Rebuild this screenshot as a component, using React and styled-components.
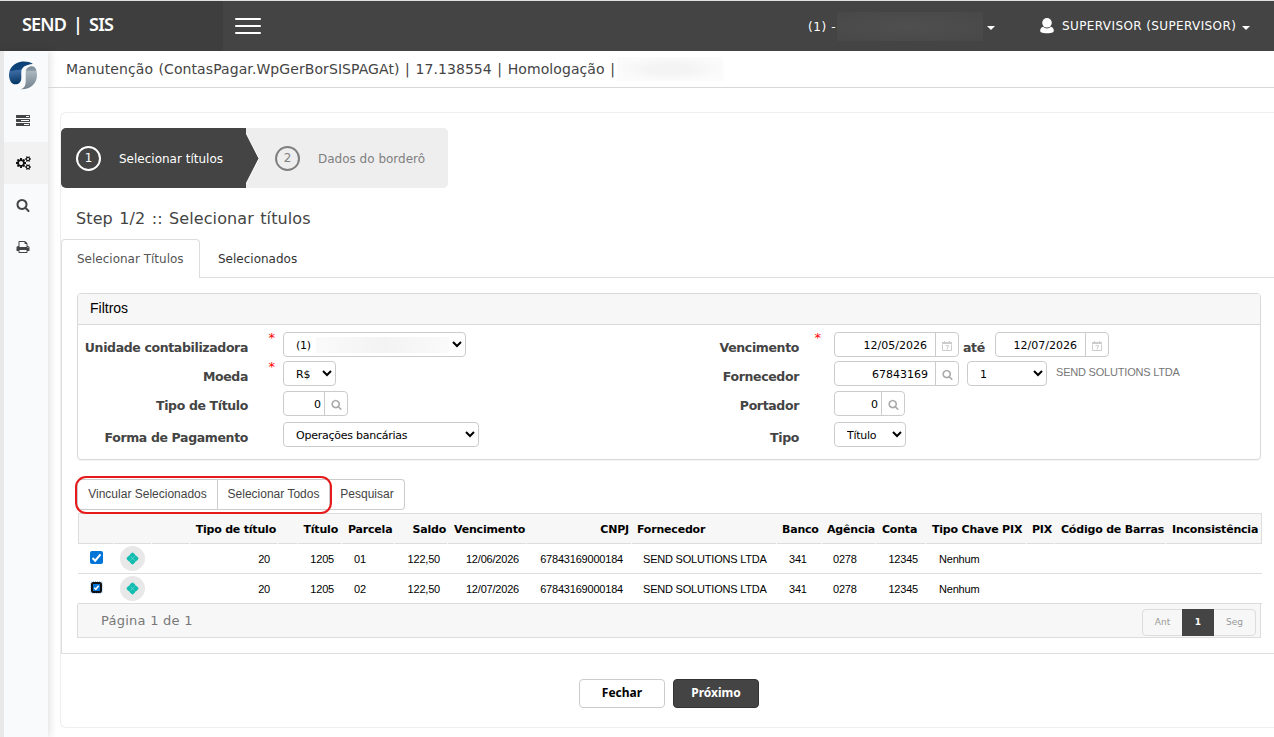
import React from "react";
import styled, { createGlobalStyle } from "styled-components";

const filtersLeft = [
  { label: "Unidade contabilizadora", required: true, type: "select", value: "(1)", width: 183, masked: true },
  { label: "Moeda", required: true, type: "select", value: "R$", width: 53 },
  { label: "Tipo de Título", type: "lookup", value: "0", width: 65, raised: true },
  { label: "Forma de Pagamento", type: "select", value: "Operações bancárias", width: 196 },
];

const columns = [
  { key: "check" },
  { key: "pix" },
  { key: "empty" },
  { key: "tipo", title: "Tipo de título", align: "right" },
  { key: "gap" },
  { key: "titulo", title: "Título", align: "right", headPad: 3 },
  { key: "parcela", title: "Parcela" },
  { key: "saldo", title: "Saldo", align: "right" },
  { key: "vencimento", title: "Vencimento", cellAlign: "right" },
  { key: "cnpj", title: "CNPJ", align: "right", headPad: 2, cellPad: 8 },
  { key: "fornecedor", title: "Fornecedor", headPad: 5, cellPad: 11 },
  { key: "banco", title: "Banco", headPad: 5 },
  { key: "agencia", title: "Agência", headPad: 5, cellPad: 11 },
  { key: "conta", title: "Conta", cellAlign: "right" },
  { key: "tipoChave", title: "Tipo Chave PIX", cellPad: 13 },
  { key: "chave", title: "PIX", headPad: 5 },
  { key: "barras", title: "Código de Barras" },
  { key: "inconsistencia", title: "Inconsistência" },
];

const base = {
  tipo: "20",
  titulo: "1205",
  saldo: "122,50",
  cnpj: "67843169000184",
  fornecedor: "SEND SOLUTIONS LTDA",
  banco: "341",
  agencia: "0278",
  conta: "12345",
  tipoChave: "Nenhum",
};

const rows = [
  { ...base, parcela: "01", vencimento: "12/06/2026" },
  { ...base, parcela: "02", vencimento: "12/07/2026", focused: true },
];

const SearchIcon = ({ size }) => (
  <svg width={size} height={size} viewBox="0 0 1792 1792" fill="currentColor">
    <path d="M1216 832q0-185-131.5-316.5t-316.5-131.5-316.5 131.5-131.5 316.5 131.5 316.5 316.5 131.5 316.5-131.5 131.5-316.5zm512 832q0 52-38 90t-90 38q-54 0-90-38l-343-342q-179 124-399 124-143 0-273.5-55.5t-225-150-150-225-55.5-273.5 55.5-273.5 150-225 225-150 273.5-55.5 273.5 55.5 225 150 150 225 55.5 273.5q0 220-124 399l343 343q37 37 37 90z" />
  </svg>
);

const TasksIcon = () => (
  <svg width="14" height="14" viewBox="0 0 1792 1792" fill="currentColor">
    <path d="M1024 1408h640v-128h-640v128zm-384-512h1024v-128h-1024v128zm640-512h384v-128h-384v128zm512 832v256q0 26-19 45t-45 19h-1664q-26 0-45-19t-19-45v-256q0-26 19-45t45-19h1664q26 0 45 19t19 45zm0-512v256q0 26-19 45t-45 19h-1664q-26 0-45-19t-19-45v-256q0-26 19-45t45-19h1664q26 0 45 19t19 45zm0-512v256q0 26-19 45t-45 19h-1664q-26 0-45-19t-19-45v-256q0-26 19-45t45-19h1664q26 0 45 19t19 45z" />
  </svg>
);

const CogsIcon = () => (
  <svg width="15" height="14" viewBox="0 0 1920 1792" fill="currentColor">
    <path d="M896 896q0-106-75-181t-181-75-181 75-75 181 75 181 181 75 181-75 75-181zm768 512q0-52-38-90t-90-38-90 38-38 90q0 53 37.5 90.5t90.5 37.5 90.5-37.5 37.5-90.5zm0-1024q0-52-38-90t-90-38-90 38-38 90q0 53 37.5 90.5t90.5 37.5 90.5-37.5 37.5-90.5zm-384 421v185q0 10-7 19.5t-16 10.5l-155 24q-11 35-32 76 34 48 90 115 7 11 7 20 0 12-7 19-23 30-82.5 89.5t-78.5 59.5q-11 0-21-7l-115-90q-37 19-77 31-11 108-23 155-7 24-30 24h-186q-11 0-20-7.5t-10-17.5l-23-153q-34-10-75-31l-118 89q-7 7-20 7-11 0-21-8-144-133-144-160 0-9 7-19 10-14 41-53t47-61q-23-44-35-82l-152-24q-10-1-17-9.5t-7-19.500v-185q0-10 7-19.500t16-10.500l155-24q11-35 32-76-34-48-90-115-7-11-7-20 0-12 7-20 22-30 82-89t79-59q11 0 21 7l115 90q34-18 77-32 11-108 23-154 7-24 30-24h186q11 0 20 7.500t10 17.500l23 153q34 10 75 31l118-89q8-7 20-7 11 0 21 8 144 133 144 160 0 8-7 19-12 16-42 54t-45 60q23 48 34 82l152 23q10 2 17 10.500t7 19.500zm640 533v140q0 16-149 31-12 27-30 52 51 113 51 138 0 4-4 7-122 71-124 71-8 0-46-47t-52-68q-20 2-30 2t-30-2q-14 21-52 68t-46 47q-2 0-124-71-4-3-4-7 0-25 51-138-18-25-30-52-149-15-149-31v-140q0-16 149-31 13-29 30-52-51-113-51-138 0-4 4-7 4-2 35-20t59-34 30-16q8 0 46 46.500t52 67.500q20-2 30-2t30 2q51-71 92-112l6-2q4 0 124 70 4 3 4 7 0 25-51 138 17 23 30 52 149 15 149 31zm0-1024v140q0 16-149 31-12 27-30 52 51 113 51 138 0 4-4 7-122 71-124 71-8 0-46-47t-52-68q-20 2-30 2t-30-2q-14 21-52 68t-46 47q-2 0-124-71-4-3-4-7 0-25 51-138-18-25-30-52-149-15-149-31v-140q0-16 149-31 13-29 30-52-51-113-51-138 0-4 4-7 4-2 35-20t59-34 30-16q8 0 46 46.500t52 67.500q20-2 30-2t30 2q51-71 92-112l6-2q4 0 124 70 4 3 4 7 0 25-51 138 17 23 30 52 149 15 149 31z" />
  </svg>
);

const PrintIcon = () => (
  <svg width="14" height="14" viewBox="0 0 1792 1792" fill="currentColor">
    <path d="M448 1536h896v-256h-896v256zm0-640h896v-384h-160q-40 0-68-28t-28-68v-160h-640v640zm1152 64q0-26-19-45t-45-19-45 19-19 45 19 45 45 19 45-19 19-45zm128 0v416q0 13-9.5 22.5t-22.5 9.5h-224v160q0 40-28 68t-68 28h-960q-40 0-68-28t-28-68v-160h-224q-13 0-22.5-9.5t-9.5-22.5v-416q0-79 56.5-135.5t135.5-56.5h64v-544q0-40 28-68t68-28h672q40 0 88 20t76 48l152 152q28 28 48 76t20 88v256h64q79 0 135.5 56.5t56.5 135.5z" />
  </svg>
);

const CalendarIcon = () => (
  <svg width="10" height="10" viewBox="0 0 10 10" fill="none" stroke="#ccc">
    <path d="M.5 3.500v6h9v-6" />
    <path d="M0 2h10" strokeWidth="2" />
    <path d="M2.500 0v1M7.500 0v1" />
    <path d="M3.500 4.700h3L5 8.500" />
  </svg>
);

const UserIcon = () => (
  <svg width="14" height="16" viewBox="0 0 14 16" fill="#fff">
    <ellipse cx="7" cy="4.8" rx="4.8" ry="4.8" />
    <path d="M3.2 8.7C1.2 9.3.2 10.6.2 12.6c0 2 1.3 2.7 6.8 2.7s6.8-.7 6.8-2.7c0-2-1-3.300-3-3.900C9.800 9.900 8.500 10.400 7 10.400s-2.800-.5-3.800-1.700z" />
  </svg>
);

const LogoIcon = () => (
  <svg width="28" height="29" viewBox="0 0 28 29">
    <defs>
      <linearGradient id="blue" x1="0" y1="0" x2="0.15" y2="1">
        <stop offset="0" stopColor="#063d72" />
        <stop offset=".4" stopColor="#10467c" />
        <stop offset=".43" stopColor="#3c6ca3" />
        <stop offset="1" stopColor="#073766" />
      </linearGradient>
      <linearGradient id="gray" x1="0" y1="0" x2="0" y2="1">
        <stop offset="0" stopColor="#7d8e9b" />
        <stop offset=".17" stopColor="#8797a3" />
        <stop offset=".22" stopColor="#abb6be" />
        <stop offset="1" stopColor="#71828e" />
      </linearGradient>
    </defs>
    <path fill="url(#blue)" d="M24 3C19-.2 12 0 7.500 2.200 2.500 4.700 0 9 0 14c0 4.500 2.200 9 5.500 9.300 4 .3 6.800-1.800 6.800-6.300v-6C12.300 6.500 16 3.700 24 3z" />
    <path fill="url(#gray)" d="M11.500 28.300c4-1 5.200-4 5.200-8.300v-8c0-4.500 2.300-6.700 6.300-6.700 3.500 0 5 4.200 5 9.200 0 8-7 14.500-16.500 13.800z" />
  </svg>
);

const PixIcon = () => (
  <svg width="13" height="13" viewBox="0 0 12 12" fill="#12bdb0">
    <rect x="3.700" y="0.900" width="4.600" height="4.600" rx="1.600" transform="rotate(45 6 3.200)" />
    <rect x="3.700" y="6.500" width="4.600" height="4.600" rx="1.600" transform="rotate(45 6 8.800)" />
    <rect x="0.900" y="3.700" width="4.600" height="4.600" rx="1.600" transform="rotate(45 3.200 6)" />
    <rect x="6.500" y="3.700" width="4.600" height="4.600" rx="1.600" transform="rotate(45 8.800 6)" />
    <path d="M4.200 4.200l3.600 3.600M7.800 4.200L4.200 7.800" stroke="#7fd9d2" strokeWidth=".6" />
  </svg>
);

const CheckIcon = ({ size }) => (
  <svg width={size} height={size} viewBox="0 0 13 13" fill="none" stroke="#fff" strokeWidth={size < 13 ? 3 : 2}>
    <path d="M2.500 7l2.700 2.700L10.500 3.300" />
  </svg>
);

function Select({ value, width, masked }) {
  return (
    <SelectWrap>
      <SelectBox $width={width} defaultValue={value}>
        <option>{value}</option>
      </SelectBox>
      {masked && <SelectMask />}
    </SelectWrap>
  );
}

function InputGroup({ value, width, calendar, pad }) {
  return (
    <Group $width={width}>
      <GroupInput defaultValue={value} $pad={pad} />
      <GroupButton>{calendar ? <CalendarIcon /> : <SearchIcon size={11} />}</GroupButton>
    </Group>
  );
}

function Field({ label, required, raised, markPad = 8, children }) {
  return (
    <>
      <Label $raised={raised}>{label}</Label>
      <Required $pad={markPad}>{required && "*"}</Required>
      <Control>{children}</Control>
    </>
  );
}

function App() {
  return (
    <Page>
      <GlobalStyle />
      <TopBar>
        <Brand>SEND | SIS</Brand>
        <Burger>
          <i />
          <i />
          <i />
        </Burger>
        <Company>(1) -</Company>
        <CompanyMask />
        <Caret />
        <User>
          <UserIcon />
          <span>SUPERVISOR (SUPERVISOR)</span>
          <Caret />
        </User>
      </TopBar>
      <Body>
        <Sidebar>
          <Logo>
            <LogoIcon />
          </Logo>
          <SideItem>
            <TasksIcon />
          </SideItem>
          <SideItem $active>
            <CogsIcon />
          </SideItem>
          <SideItem>
            <SearchIcon size={14} />
          </SideItem>
          <SideItem>
            <PrintIcon />
          </SideItem>
        </Sidebar>
        <Main>
          <TitleBar>
            <span>Manutenção (ContasPagar.WpGerBorSISPAGAt) | 17.138554 | Homologação |</span>
            <TitleMask />
          </TitleBar>
          <Card>
            <Wizard>
              <Step $active>
                <StepNumber>1</StepNumber>
                <StepText>Selecionar títulos</StepText>
              </Step>
              <Arrow width="13" height="60" viewBox="0 0 13 60">
                <path d="M0 5L13 30.500 0 56z" fill="#444" />
                <path d="M0 5L13 30.500 0 56" fill="none" stroke="#fff" strokeWidth="1" />
              </Arrow>
              <Step>
                <StepNumber>2</StepNumber>
                <StepText>Dados do borderô</StepText>
              </Step>
            </Wizard>
            <Heading>Step 1/2 :: Selecionar títulos</Heading>
            <Tabs>
              <Tab $active>Selecionar Títulos</Tab>
              <Tab>Selecionados</Tab>
            </Tabs>
            <TabPanel>
              <Panel>
                <PanelTitle>Filtros</PanelTitle>
                <Filters>
                  <FieldGrid>
                    {filtersLeft.map(({ label, required, raised, type, ...rest }) => (
                      <Field key={label} label={label} required={required} raised={raised}>
                        {type === "select" ? <Select {...rest} /> : <InputGroup {...rest} pad={3} />}
                      </Field>
                    ))}
                  </FieldGrid>
                  <FieldGrid>
                    <Field label="Vencimento" required markPad={13}>
                      <InputGroup value="12/05/2026" width={125} calendar pad={8} />
                      <Until>até</Until>
                      <InputGroup value="12/07/2026" width={114} calendar pad={8} />
                    </Field>
                    <Field label="Fornecedor">
                      <InputGroup value="67843169" width={125} pad={7} />
                      <Spacer />
                      <Select value="1" width={80} />
                      <Supplier>SEND SOLUTIONS LTDA</Supplier>
                    </Field>
                    <Field label="Portador" raised>
                      <InputGroup value="0" width={71} pad={3} />
                    </Field>
                    <Field label="Tipo">
                      <Select value="Título" width={72} />
                    </Field>
                  </FieldGrid>
                </Filters>
              </Panel>
              <Actions>
                <ActionButton $width={141}>Vincular Selecionados</ActionButton>
                <ActionButton $width={112}>Selecionar Todos</ActionButton>
                <ActionButton $width={75}>Pesquisar</ActionButton>
                <Highlight />
              </Actions>
              <Table>
                <HeadRow>
                  {columns.map(({ key, title, align, headPad }) => (
                    <HeadCell key={key} $align={align} $pad={headPad}>
                      {title}
                    </HeadCell>
                  ))}
                </HeadRow>
                {rows.map((row) => (
                  <Row key={row.parcela}>
                    {columns.map(({ key, align, cellAlign, cellPad }) => (
                      <Cell key={key} $align={cellAlign || align} $pad={cellPad}>
                        {key === "check" && (
                          <Checkbox $focused={row.focused}>
                            <CheckIcon size={row.focused ? 7 : 13} />
                          </Checkbox>
                        )}
                        {key === "pix" && (
                          <PixBadge>
                            <PixIcon />
                          </PixBadge>
                        )}
                        {row[key]}
                      </Cell>
                    ))}
                  </Row>
                ))}
              </Table>
              <Footer>
                <PageInfo>Página 1 de 1</PageInfo>
                <Pager>
                  <PageButton $width={39}>Ant</PageButton>
                  <PageButton $width={32} $current>
                    1
                  </PageButton>
                  <PageButton $width={41}>Seg</PageButton>
                </Pager>
              </Footer>
            </TabPanel>
            <Buttons>
              <Button>Fechar</Button>
              <Button $primary>Próximo</Button>
            </Buttons>
          </Card>
        </Main>
      </Body>
    </Page>
  );
}
export default App;

const verdana = `Verdana, "DejaVu Sans", sans-serif`;
const arial = `"Liberation Sans", Arial, sans-serif`;

const GlobalStyle = createGlobalStyle`
  * {
    box-sizing: border-box;
  }
  body {
    margin: 0;
    overflow: hidden;
    background: #fff;
    font-family: ${verdana};
    color: #444;
  }
`;

const Page = styled.div`
  height: 737px;
  display: flex;
  flex-direction: column;
  border-top: 1px solid #dde1df;
  overflow: hidden;
`;

const TopBar = styled.header`
  height: 50px;
  flex: none;
  display: flex;
  align-items: center;
  background: #444;
  color: #fff;
  font-size: 12px;
`;

const Brand = styled.div`
  width: 223px;
  height: 50px;
  padding: 0 0 3px 22px;
  background: #3e3e3e;
  font: 600 18px/46px "Noto Sans", sans-serif;
  letter-spacing: -0.8px;
  word-spacing: 3px;
  white-space: pre;
`;

const Burger = styled.div`
  width: 26px;
  margin-left: 12px;
  display: flex;
  flex-direction: column;
  gap: 5px;

  i {
    height: 2px;
    border-radius: 1px;
    background: #fff;
  }
`;

const Company = styled.span`
  margin-left: 547px;
  padding-top: 1px;
  width: 29px;
  white-space: nowrap;
  letter-spacing: 0.6px;
`;

const CompanyMask = styled.div`
  width: 146px;
  height: 29px;
  background: radial-gradient(#4f4f4f, #484848);
`;

const Caret = styled.i`
  margin: 3px 0 0 4px;
  border: 4px solid transparent;
  border-top-color: #fff;
  border-bottom: 0;
`;

const User = styled.div`
  margin-left: 45px;
  display: flex;
  align-items: center;

  span {
    width: 176px;
    margin-left: 8px;
    white-space: nowrap;
    letter-spacing: 0.39px;
  }
`;

const Body = styled.div`
  flex: 1;
  display: flex;
  min-height: 0;
`;

const Sidebar = styled.nav`
  width: 48px;
  flex: none;
  border-left: 4px solid #e8e8e8;
  background: #f8fafc;
  box-shadow: 2px 0 8px rgba(0, 0, 0, 0.12);
`;

const Logo = styled.div`
  height: 49px;
  padding: 10px 0 0 5px;
`;

const SideItem = styled.div`
  height: 42px;
  padding-right: 6px;
  display: flex;
  align-items: center;
  justify-content: center;
  color: ${(props) => (props.$active ? "#111" : "#444")};
  background: ${(props) => (props.$active ? "#f2f2f2" : "none")};
`;

const Main = styled.main`
  flex: 1;
  min-width: 0;
`;

const TitleBar = styled.div`
  height: 37px;
  padding: 0 0 1px 18px;
  display: flex;
  align-items: center;
  border-bottom: 1px solid #d8d8d8;
  font-size: 14px;
  letter-spacing: 0.08px;
  word-spacing: 1px;
  white-space: nowrap;
`;

const TitleMask = styled.div`
  width: 106px;
  height: 24px;
  margin-left: 2px;
  background: radial-gradient(closest-side, #f4f4f4 40%, #fbfbfb);
`;

const Card = styled.section`
  height: 616px;
  margin: 24px 0 0 12px;
  padding-top: 15px;
  border: 1px solid #eee;
  border-right: 0;
  border-radius: 6px 0 0 6px;
`;

const Wizard = styled.div`
  width: 387px;
  height: 60px;
  display: flex;
  overflow: hidden;
  border-radius: 5px;
  background: #eee;
`;

const Step = styled.div`
  width: ${(props) => (props.$active ? "185px" : "189px")};
  padding-left: ${(props) => (props.$active ? "15px" : "16px")};
  display: flex;
  align-items: center;
  gap: 18px;
  background: ${(props) => (props.$active ? "#444" : "#eee")};
  color: ${(props) => (props.$active ? "#fff" : "#808080")};
  font-size: 12px;
  white-space: nowrap;
`;

const StepNumber = styled.span`
  width: 25px;
  height: 25px;
  border: 2px solid;
  border-radius: 50%;
  text-align: center;
  line-height: 20px;
`;

const StepText = styled.span`
  padding-top: 2px;
`;

const Arrow = styled.svg`
  flex: none;
`;

const Heading = styled.h1`
  height: 51px;
  margin: 0;
  padding: 0 0 0 15px;
  font-size: 16px;
  font-weight: 400;
  letter-spacing: 0.1px;
  word-spacing: 1.2px;
  line-height: 62px;
`;

const Tabs = styled.div`
  height: 39px;
  display: flex;
`;

const Tab = styled.div`
  width: ${(props) => (props.$active ? "139px" : "auto")};
  flex: ${(props) => (props.$active ? "none" : 1)};
  padding-left: ${(props) => (props.$active ? "15px" : "18px")};
  border: 1px solid #ddd;
  border-width: ${(props) => (props.$active ? "1px 1px 0 1px" : "0 0 1px 0")};
  border-radius: ${(props) => (props.$active ? "4px 4px 0 0" : 0)};
  color: ${(props) => (props.$active ? "#555" : "#333")};
  font-size: 12px;
  line-height: ${(props) => (props.$active ? "39px" : "41px")};
  white-space: nowrap;
`;

const TabPanel = styled.div`
  height: 376px;
  padding: 15px 0 0 15px;
  border: 1px solid #ddd;
  border-width: 0 0 1px 1px;
`;

const Panel = styled.div`
  width: 1184px;
  height: 167px;
  border: 1px solid #d9d9d9;
  border-radius: 4px;
  box-shadow: 0 1px 1px rgba(0, 0, 0, 0.05);
`;

const PanelTitle = styled.div`
  height: 31px;
  padding-left: 12px;
  border-bottom: 1px solid #d9d9d9;
  border-radius: 3px 3px 0 0;
  background: #f7f7f7;
  color: #000;
  font: 14px/29px ${arial};
`;

const Filters = styled.div`
  display: flex;
`;

const FieldGrid = styled.div`
  width: 551px;
  display: grid;
  grid-template-columns: 170px 35px 1fr;
  grid-template-rows: 29px 30px 31px 26px;
  padding-top: 7px;
`;

const Label = styled.label`
  padding-top: ${(props) => (props.$raised ? 3 : 4)}px;
  text-align: right;
  font-size: 12.5px;
  font-weight: 700;
  letter-spacing: -0.36px;
  line-height: 24px;
  white-space: nowrap;
`;

const Required = styled.span`
  padding-right: ${(props) => props.$pad}px;
  text-align: right;
  color: #f00;
  font-size: 13px;
  line-height: 11px;
`;

const Control = styled.div`
  display: flex;
  align-items: flex-start;
`;

const SelectWrap = styled.div`
  position: relative;
`;

const SelectBox = styled.select`
  width: ${(props) => props.$width}px;
  height: 25px;
  padding: 1px 0 0 8px;
  border: 1px solid #ccc;
  border-radius: 4px;
  background: #fff;
  color: #000;
  font: 11px ${verdana};
  letter-spacing: -0.25px;
`;

const SelectMask = styled.div`
  position: absolute;
  left: 33px;
  top: 5px;
  width: 133px;
  height: 16px;
  background: linear-gradient(90deg, #fafafa, #f3f3f3, #fafafa);
`;

const Group = styled.div`
  width: ${(props) => props.$width}px;
  height: 25px;
  display: flex;
  border: 1px solid #ccc;
  border-radius: 4px;
`;

const GroupInput = styled.input`
  flex: 1;
  min-width: 0;
  padding: 2px ${(props) => props.$pad}px 0 0;
  border: 0;
  background: none;
  color: #000;
  font: 11px ${verdana};
  text-align: right;
`;

const GroupButton = styled.span`
  width: 23px;
  padding-top: 2px;
  display: flex;
  align-items: center;
  justify-content: center;
  border-left: 1px solid #ccc;
  color: #aaa;
`;

const Until = styled.span`
  width: 36px;
  padding: 4px 0 0 4px;
  font-size: 12.5px;
  font-weight: 700;
  letter-spacing: -0.33px;
  line-height: 24px;
`;

const Spacer = styled.span`
  width: 8px;
`;

const Supplier = styled.span`
  margin-left: 9px;
  color: #777;
  font: 11px/22px ${arial};
  letter-spacing: -0.2px;
  white-space: nowrap;
`;

const Actions = styled.div`
  position: relative;
  height: 31px;
  margin-top: 19px;
  display: flex;
`;

const ActionButton = styled.button`
  width: ${(props) => props.$width}px;
  height: 31px;
  padding: 0 0 2px;
  border: 1px solid #ccc;
  border-left-width: 0;
  background: #fff;
  color: #444;
  font: 12px ${arial};
  white-space: nowrap;

  &:first-child {
    border-left-width: 1px;
    border-radius: 4px 0 0 4px;
  }
  &:nth-child(3) {
    border-radius: 0 4px 4px 0;
  }
`;

const Highlight = styled.div`
  position: absolute;
  left: -2px;
  top: -3px;
  width: 257px;
  height: 38px;
  border: 2px solid #e8191b;
  border-radius: 11px;
`;

const Table = styled.div`
  width: 1184px;
  margin: 3px 0 0 1px;
`;

const HeadRow = styled.div`
  height: 31px;
  display: grid;
  grid-template-columns: 35px 37px 37px 87px 19px 43px 52px 52px 78px 104px 144px 44px 53px 49px 100px 27px 110px 96px;
  grid-template-rows: 100%;
  column-gap: 1px;
  background: #f7f7f7;
  box-shadow: inset 1px 1px #ddd, inset -1px 0 #ddd;
`;

const HeadCell = styled.div`
  padding: ${(props) => (props.$align ? `0 ${props.$pad || 1}px 0 0` : `0 0 0 ${props.$pad || 6}px`)};
  border-bottom: 1px solid #ddd;
  text-align: ${(props) => props.$align || "left"};
  color: #000;
  font-size: 11px;
  font-weight: 700;
  letter-spacing: -0.2px;
  line-height: 33px;
  white-space: nowrap;
`;

const Row = styled(HeadRow)`
  height: 30px;
  background: #fff;
  box-shadow: inset 0 -1px #ddd;
`;

const Cell = styled.div`
  padding: ${(props) => (props.$align ? `0 ${props.$pad || 7}px 0 0` : `0 0 0 ${props.$pad || 12}px`)};
  display: flex;
  align-items: center;
  justify-content: ${(props) => (props.$align === "right" ? "flex-end" : "flex-start")};
  color: #000;
  font: 11px ${arial};
  letter-spacing: -0.2px;
  white-space: nowrap;
`;

const Checkbox = styled.span`
  width: ${(props) => (props.$focused ? 11 : 13)}px;
  height: ${(props) => (props.$focused ? 11 : 13)}px;
  flex: none;
  margin: ${(props) => (props.$focused ? "0 0 3px 1px" : "0 0 3px")};
  display: flex;
  align-items: center;
  justify-content: center;
  border: ${(props) => (props.$focused ? "2px solid #101010" : 0)};
  border-radius: 2px;
  outline: ${(props) => (props.$focused ? "1px dotted #9cc8f0" : "none")};
  background: #0075d7;
`;

const PixBadge = styled.span`
  width: 25px;
  height: 25px;
  flex: none;
  margin: 0 0 2px -6px;
  display: flex;
  align-items: center;
  justify-content: center;
  border-radius: 50%;
  background: #e8e8e8;
`;

const Footer = styled.div`
  width: 1184px;
  height: 34px;
  display: flex;
  justify-content: space-between;
  border: 1px solid #ddd;
  border-top: 0;
  background: #f7f7f7;
`;

const PageInfo = styled.span`
  padding-left: 23px;
  color: #777;
  font-size: 13px;
  letter-spacing: 0.25px;
  line-height: 34px;
`;

const Pager = styled.div`
  height: 27px;
  margin: 5px 4px 0 0;
  display: flex;
  border: 1px solid #ddd;
  border-radius: 4px;
`;

const PageButton = styled.span`
  width: ${(props) => props.$width}px;
  margin: ${(props) => (props.$current ? "-1px 0" : 0)};
  background: ${(props) => (props.$current ? "#444" : "none")};
  color: ${(props) => (props.$current ? "#fff" : "#999")};
  font-size: 9px;
  font-weight: ${(props) => (props.$current ? 700 : 400)};
  line-height: ${(props) => (props.$current ? "26px" : "24px")};
  text-align: center;
`;

const Buttons = styled.div`
  display: flex;
  gap: 8px;
  padding: 25px 0 0 518px;
`;

const Button = styled.button`
  width: 86px;
  height: 29px;
  padding: 0 0 2px;
  border: 1px solid ${(props) => (props.$primary ? "#333" : "#ccc")};
  border-radius: 4px;
  background: ${(props) => (props.$primary ? "#444" : "#fff")};
  color: ${(props) => (props.$primary ? "#fff" : "#000")};
  font: 700 12px "Noto Sans", sans-serif;
`;
